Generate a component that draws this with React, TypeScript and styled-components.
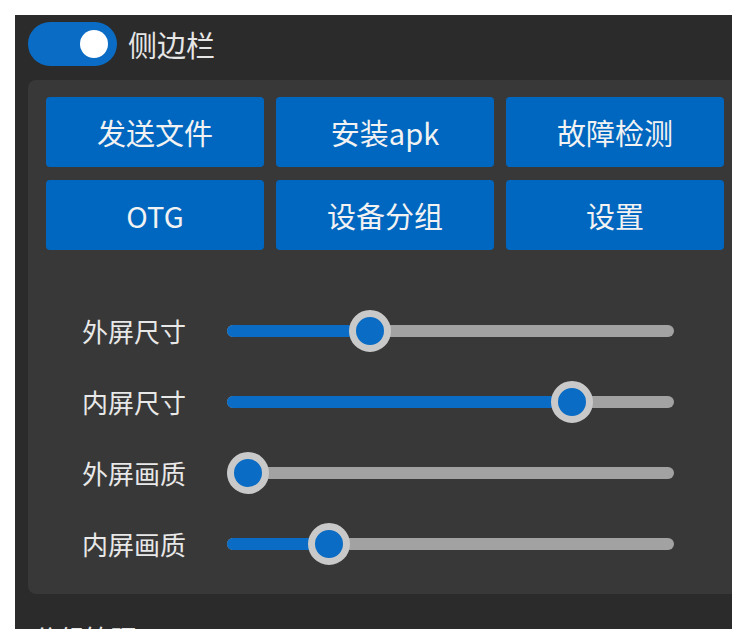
import styled, { createGlobalStyle } from "styled-components"

const GlobalStyle = createGlobalStyle`
  html, body {
    margin: 0;
    padding: 0;
    background: #ffffff;
  }
  body {
    font-family: "Noto Sans CJK SC", "Noto Sans", sans-serif;
  }
`

const Panel = styled.div`
  margin: 15px;
  width: 717px;
  height: 614px;
  box-sizing: border-box;
  padding: 7px 0 0 13px;
  background: #2b2b2b;
  overflow: hidden;
`

const ToggleRow = styled.div`
  display: flex;
  align-items: center;
  gap: 11px;
  height: 44px;
`

const Toggle = styled.div<{ on: boolean }>`
  width: 89px;
  height: 44px;
  border-radius: 22px;
  background: ${(p) => (p.on ? "#0a6cc4" : "#777")};
  display: flex;
  align-items: center;
  justify-content: ${(p) => (p.on ? "flex-end" : "flex-start")};
  padding: 0 9px;
  box-sizing: border-box;
`

const Knob = styled.div`
  width: 28px;
  height: 28px;
  border-radius: 50%;
  background: #ffffff;
`

const ToggleLabel = styled.span`
  font-size: 29px;
  line-height: 1;
  color: #e6e6e6;
`

const Card = styled.div`
  margin-top: 14px;
  width: 720px;
  box-sizing: border-box;
  padding: 17px 18px 15px;
  background: #383838;
  border-radius: 8px;
`

const ButtonGrid = styled.div`
  display: grid;
  grid-template-columns: repeat(3, 218px);
  column-gap: 12px;
  row-gap: 13px;
`

const ActionButton = styled.button`
  height: 70px;
  border: none;
  border-radius: 4px;
  background: #0067c0;
  color: #f2f2f2;
  font-family: "Noto Sans CJK SC", "Noto Sans", sans-serif;
  font-size: 29px;
  display: flex;
  align-items: center;
  justify-content: center;
  padding: 0;
`

const SliderList = styled.div`
  margin-top: 45px;
  padding-left: 36px;
  display: flex;
  flex-direction: column;
`

const SliderRow = styled.div`
  height: 71px;
  display: flex;
  align-items: center;
`

const SliderLabel = styled.span`
  width: 145px;
  font-size: 26px;
  line-height: 1;
  color: #e8e8e8;
`

const Track = styled.div`
  position: relative;
  width: 447px;
  height: 12px;
  border-radius: 6px;
  background: #a2a2a2;
`

const Fill = styled.div`
  position: absolute;
  left: 0;
  top: 0;
  bottom: 0;
  border-radius: 6px;
  background: #0a6cc4;
`

const Thumb = styled.div`
  position: absolute;
  top: 50%;
  width: 28px;
  height: 28px;
  margin-left: -21px;
  margin-top: -21px;
  border-radius: 50%;
  border: 7px solid #c9c9c9;
  background: #0a6cc4;
`

const SectionTitle = styled.div`
  margin: 31px 0 0 5px;
  font-size: 26px;
  line-height: 26px;
  color: #e8e8e8;
`

const buttons = ["发送文件", "安装apk", "故障检测", "OTG", "设备分组", "设置"]

const sliders = [
  { label: "外屏尺寸", value: 0.3 },
  { label: "内屏尺寸", value: 0.8 },
  { label: "外屏画质", value: 0 },
  { label: "内屏画质", value: 0.2 },
]

function Slider({ value }: { value: number }) {
  // thumb travels inside the track, 21px from each end
  const x = 21 + value * (447 - 42)
  return (
    <Track>
      <Fill style={{ width: x }} />
      <Thumb style={{ left: x }} />
    </Track>
  )
}

export default function App() {
  return (
    <>
      <GlobalStyle />
      <Panel>
        <ToggleRow>
          <Toggle on>
            <Knob />
          </Toggle>
          <ToggleLabel>侧边栏</ToggleLabel>
        </ToggleRow>
        <Card>
          <ButtonGrid>
            {buttons.map((b) => (
              <ActionButton key={b}>{b}</ActionButton>
            ))}
          </ButtonGrid>
          <SliderList>
            {sliders.map((s) => (
              <SliderRow key={s.label}>
                <SliderLabel>{s.label}</SliderLabel>
                <Slider value={s.value} />
              </SliderRow>
            ))}
          </SliderList>
        </Card>
        <SectionTitle>分组管理</SectionTitle>
      </Panel>
    </>
  )
}
